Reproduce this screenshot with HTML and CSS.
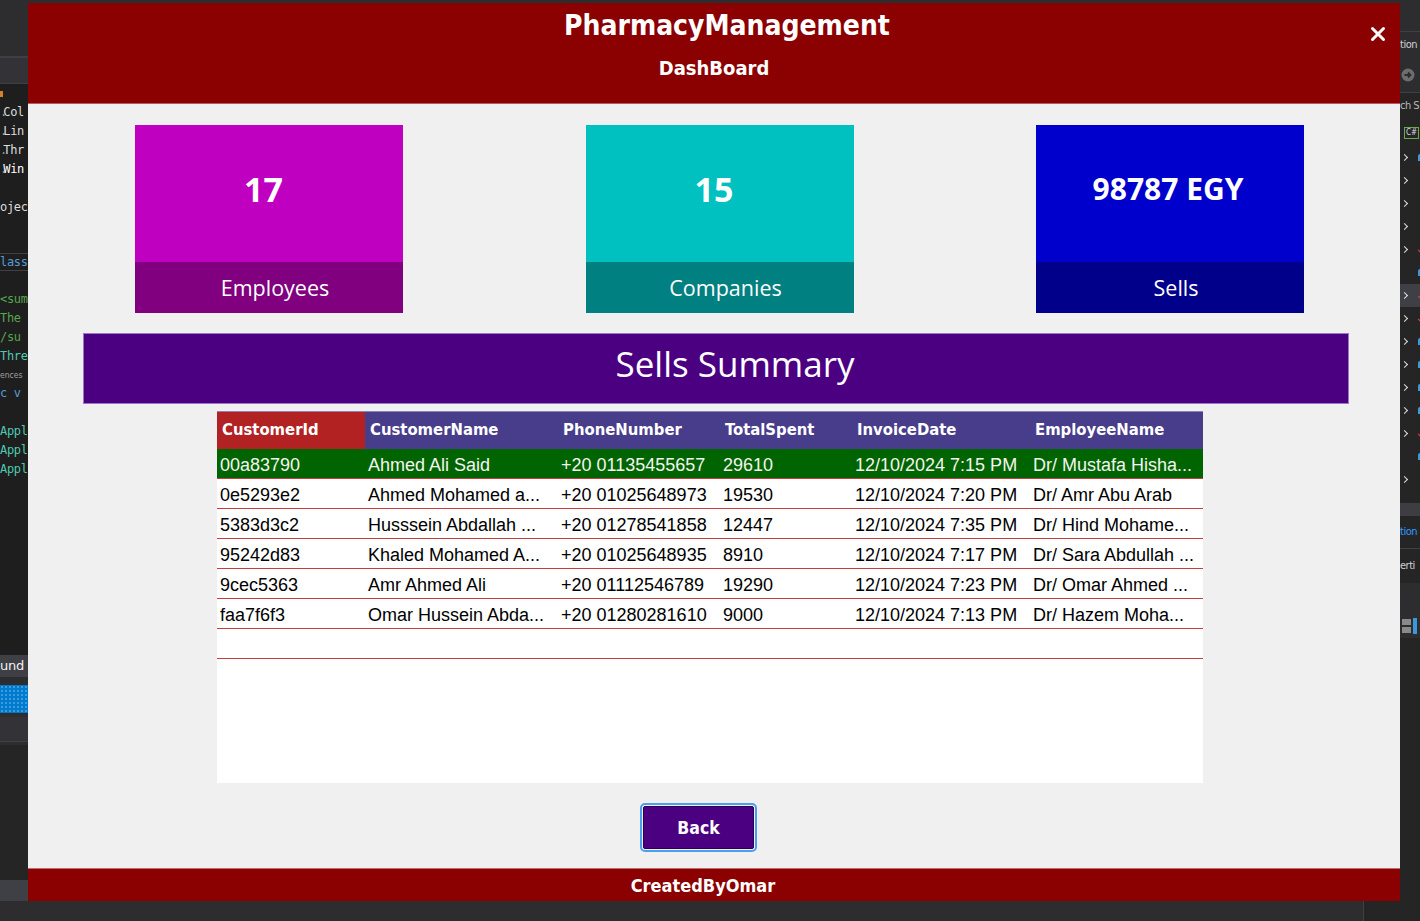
FILE: index.html
```html
<!DOCTYPE html>
<html lang="en">
<head>
<meta charset="utf-8">
<title>PharmacyManagement - DashBoard</title>
<link rel="stylesheet" href="styles.css">
</head>
<body>
<div class="desktop">
  <div class="topbar"></div>

  <aside class="ide-left">
    <div class="ide-toolbar"></div>
    <div class="ide-sep2"></div>
    <div class="ide-tabs"></div>
    <div class="ide-sep1"></div>
    <div class="editor">
      <div class="code"><span class="mark"></span></div>
      <div class="code txt"><span class="dot">.</span>Col</div>
      <div class="code txt"><span class="dot">.</span>Lin</div>
      <div class="code txt"><span class="dot">.</span>Thr</div>
      <div class="code txt bright"><span class="dot">.</span>Win</div>
      <div class="code"></div>
      <div class="code txt">ojec</div>
      <div class="code"></div>
      <div class="gap17"></div>
      <div class="code band kw">lass</div>
      <div class="code"></div>
      <div class="code cm">&lt;sum</div>
      <div class="code cm">The</div>
      <div class="code cm">/su</div>
      <div class="code ty">Thre</div>
      <div class="lens">ences</div>
      <div class="code kw">c v</div>
      <div class="code"></div>
      <div class="code ty">Appl</div>
      <div class="code ty">Appl</div>
      <div class="code ty">Appl</div>
    </div>
    <div class="tool-tab">und</div>
    <div class="tool-gap"></div>
    <div class="tool-blue"></div>
    <div class="tool-gap2"></div>
    <div class="tool-row"></div>
    <div class="tool-line"></div>
    <div class="tool-body"></div>
    <div class="tool-foot"></div>
  </aside>

  <main class="window">
    <header class="win-header">
      <div class="title">PharmacyManagement</div>
      <div class="subtitle">DashBoard</div>
      <button class="close" aria-label="Close">
        <svg width="16" height="16" viewBox="0 0 16 16"><path d="M2.5 2.5 L13.5 13.5 M13.5 2.5 L2.5 13.5" stroke="#ffffff" stroke-width="3" stroke-linecap="round" fill="none"/></svg>
      </button>
    </header>

    <section class="content">
      <div class="cards">
        <div class="card card-emp">
          <div class="card-value">17</div>
          <div class="card-label">Employees</div>
        </div>
        <div class="card card-comp">
          <div class="card-value">15</div>
          <div class="card-label">Companies</div>
        </div>
        <div class="card card-sells">
          <div class="card-value small">98787 EGY</div>
          <div class="card-label">Sells</div>
        </div>
      </div>

      <div class="banner">Sells Summary</div>

      <div class="grid">
        <div class="grow ghead">
          <div class="hc first">CustomerId</div>
          <div class="hc">CustomerName</div>
          <div class="hc">PhoneNumber</div>
          <div class="hc">TotalSpent</div>
          <div class="hc">InvoiceDate</div>
          <div class="hc">EmployeeName</div>
        </div>
        <div class="grow drow selected">
          <div class="dc">00a83790</div>
          <div class="dc">Ahmed Ali Said</div>
          <div class="dc">+20 01135455657</div>
          <div class="dc">29610</div>
          <div class="dc">12/10/2024 7:15 PM</div>
          <div class="dc">Dr/ Mustafa Hisha...</div>
        </div>
        <div class="grow drow">
          <div class="dc">0e5293e2</div>
          <div class="dc">Ahmed Mohamed a...</div>
          <div class="dc">+20 01025648973</div>
          <div class="dc">19530</div>
          <div class="dc">12/10/2024 7:20 PM</div>
          <div class="dc">Dr/ Amr Abu Arab</div>
        </div>
        <div class="grow drow">
          <div class="dc">5383d3c2</div>
          <div class="dc">Husssein Abdallah ...</div>
          <div class="dc">+20 01278541858</div>
          <div class="dc">12447</div>
          <div class="dc">12/10/2024 7:35 PM</div>
          <div class="dc">Dr/ Hind Mohame...</div>
        </div>
        <div class="grow drow">
          <div class="dc">95242d83</div>
          <div class="dc">Khaled Mohamed A...</div>
          <div class="dc">+20 01025648935</div>
          <div class="dc">8910</div>
          <div class="dc">12/10/2024 7:17 PM</div>
          <div class="dc">Dr/ Sara Abdullah ...</div>
        </div>
        <div class="grow drow">
          <div class="dc">9cec5363</div>
          <div class="dc">Amr Ahmed Ali</div>
          <div class="dc">+20 01112546789</div>
          <div class="dc">19290</div>
          <div class="dc">12/10/2024 7:23 PM</div>
          <div class="dc">Dr/ Omar Ahmed ...</div>
        </div>
        <div class="grow drow">
          <div class="dc">faa7f6f3</div>
          <div class="dc">Omar Hussein Abda...</div>
          <div class="dc">+20 01280281610</div>
          <div class="dc">9000</div>
          <div class="dc">12/10/2024 7:13 PM</div>
          <div class="dc">Dr/ Hazem Moha...</div>
        </div>
        <div class="grow drow">
          <div class="dc"></div><div class="dc"></div><div class="dc"></div>
          <div class="dc"></div><div class="dc"></div><div class="dc"></div>
        </div>
      </div>

      <button class="back">Back</button>
    </section>

    <footer class="win-footer">CreatedByOmar</footer>
  </main>

  <aside class="ide-right">
    <div class="r-top"></div>
    <div class="r-line"></div>
    <div class="r-text">tion</div>
    <div class="r-icon">
      <svg width="14" height="14" viewBox="0 0 14 14"><circle cx="7" cy="7" r="6.5" fill="#6d6d6d"/><path d="M3.5 7 H9.5 M7 4.5 L9.5 7 L7 9.5" stroke="#2d2d30" stroke-width="1.8" fill="none"/></svg>
    </div>
    <div class="r-line"></div>
    <div class="r-text search">ch S</div>
    <div class="r-cs"><span class="csbox">C#</span></div>
    <div class="tree">
      <div class="trow"><span class="chev"></span><span class="ic blue"></span></div>
      <div class="trow"><span class="chev"></span></div>
      <div class="trow"><span class="chev"></span></div>
      <div class="trow"><span class="chev"></span></div>
      <div class="trow"><span class="chev"></span><span class="ic red"></span></div>
      <div class="trow"><span class="chev blank"></span><span class="ic blue"></span></div>
      <div class="trow hl"><span class="chev"></span><span class="ic red"></span></div>
      <div class="trow"><span class="chev"></span><span class="ic red"></span></div>
      <div class="trow"><span class="chev"></span><span class="ic blue"></span></div>
      <div class="trow"><span class="chev"></span><span class="ic blue"></span></div>
      <div class="trow"><span class="chev"></span><span class="ic blue"></span></div>
      <div class="trow"><span class="chev"></span><span class="ic blue"></span></div>
      <div class="trow"><span class="chev"></span><span class="ic red"></span></div>
      <div class="trow"><span class="chev blank"></span><span class="ic blue"></span></div>
      <div class="trow"><span class="chev"></span></div>
    </div>
    <div class="r-scroll"></div>
    <div class="r-text tab-blue">tion</div>
    <div class="r-line"></div>
    <div class="r-text props">erti</div>
    <div class="r-toolbar"></div>
    <div class="r-az"><span class="az"></span></div>
    <div class="r-body"></div>
  </aside>

  <div class="bottombar"><div class="bb-right"></div></div>
</div>
</body>
</html>
```

FILE: styles.css
```css
* {
  box-sizing: border-box;
  margin: 0;
  padding: 0;
}

html, body {
  width: 1420px;
  height: 921px;
  overflow: hidden;
  background: #2d2d30;
}

body {
  font-family: "Liberation Sans", Arial, sans-serif;
}

.desktop {
  display: grid;
  grid-template-columns: 28px 1372px 20px;
  grid-template-rows: 3px 898px 20px;
  width: 1420px;
  height: 921px;
}

.topbar {
  grid-column: 1 / 4;
  background: #2d2d30;
}

.bottombar {
  grid-column: 1 / 4;
  background: #2d2d30;
  display: flex;
  justify-content: flex-end;
}

.bb-right {
  width: 57px;
  border-left: 1px solid #3f3f46;
  background: #252526;
}

/* ---------- IDE left strip ---------- */
.ide-left {
  display: flex;
  flex-direction: column;
  overflow: hidden;
  background: #1e1e1e;
  font-family: "DejaVu Sans Mono", "Liberation Mono", monospace;
  font-size: 12px;
  letter-spacing: -0.3px;
  white-space: nowrap;
}

.ide-toolbar { height: 53px; background: #2d2d30; flex: none; }
.ide-sep2 { height: 2px; background: #3f3f46; flex: none; }
.ide-tabs { height: 25px; background: #333337; flex: none; }
.ide-sep1 { height: 1px; background: #3f3f46; flex: none; }

.editor {
  height: 571px;
  flex: none;
  background: #1e1e1e;
}

.code {
  height: 19px;
  line-height: 19px;
  color: #dcdcdc;
}

.dot { letter-spacing: -4px; color: #9a9a9a; }
.code.bright { color: #ffffff; }
.code.kw { color: #569cd6; }
.code.cm { color: #57a64a; }
.code.ty { color: #4ec9b0; }

.mark {
  display: inline-block;
  width: 3px;
  height: 6px;
  background: #d7802b;
  vertical-align: middle;
}

.gap17 { height: 17px; }

.band {
  height: 18px;
  line-height: 16px;
  border-top: 1px solid #3f3f46;
  border-bottom: 1px solid #3f3f46;
}

.lens {
  height: 18px;
  line-height: 18px;
  font-family: "DejaVu Sans Condensed", "DejaVu Sans", sans-serif;
  font-size: 8.5px;
  letter-spacing: 0;
  color: #a0a0a0;
}

.tool-tab {
  height: 22px;
  flex: none;
  background: #3f3f46;
  color: #f1f1f1;
  font-family: "DejaVu Sans", sans-serif;
  font-size: 13px;
  line-height: 22px;
}

.tool-gap { height: 8px; background: #2d2d30; flex: none; }
.tool-blue {
  height: 28px;
  flex: none;
  background: #007acc;
  background-image: radial-gradient(circle, #3d9be0 0.8px, transparent 1px);
  background-size: 4px 4px;
  background-position: 0 12px;
}
.tool-gap2 { height: 4px; background: #2d2d30; flex: none; }
.tool-row { height: 24px; background: #333337; flex: none; }
.tool-line { height: 4px; background: #2d2d30; border-top: 1px solid #3f3f46; flex: none; }
.tool-body { flex: 1; background: #252526; }
.tool-foot { height: 21px; background: #3f3f46; flex: none; }

/* ---------- IDE right strip ---------- */
.ide-right {
  display: flex;
  flex-direction: column;
  overflow: hidden;
  background: #252526;
  font-family: "DejaVu Sans Condensed", "DejaVu Sans", sans-serif;
  font-size: 11px;
  letter-spacing: -0.5px;
  white-space: nowrap;
}

.r-top { height: 28px; background: #2d2d30; flex: none; }
.r-line { height: 1px; background: #3f3f46; flex: none; }
.r-text {
  height: 26px;
  line-height: 26px;
  color: #d0d0d0;
  background: #2d2d30;
  flex: none;
}
.r-text.search { height: 27px; background: #252526; color: #b8b8b8; }
.r-icon {
  height: 34px;
  display: flex;
  align-items: center;
  padding-left: 1px;
  background: #2d2d30;
  flex: none;
}
.r-cs {
  height: 26px;
  display: flex;
  align-items: center;
  padding-left: 4px;
  flex: none;
}
.csbox {
  font-size: 8px;
  line-height: 10px;
  letter-spacing: 0;
  color: #dcdcdc;
  border: 1px solid #6ca84c;
  padding: 0 1px;
}

.tree { display: flex; flex-direction: column; flex: none; }
.trow {
  height: 23px;
  display: flex;
  align-items: center;
  gap: 6px;
  padding-left: 2px;
}
.trow.hl { background: #3f3f46; }

/* chevron drawn as a rotated outlined square corner */
.chev {
  width: 5px;
  height: 5px;
  border-top: 1.5px solid #e0e0e0;
  border-right: 1.5px solid #e0e0e0;
  transform: rotate(45deg);
  flex: none;
}
.chev.blank { border-color: transparent; }

.ic {
  width: 6px;
  height: 7px;
  flex: none;
  margin-left: 5px;
}
.ic.blue {
  background: #3a9ad9;
  border-radius: 2px 2px 0 0;
}
.ic.red {
  width: 5px;
  height: 3px;
  border-left: 1.5px solid #e03a3a;
  border-bottom: 1.5px solid #e03a3a;
  transform: rotate(-45deg);
}

.r-scroll { height: 25px; border-top: 12px solid #252526; background: #3e3e42; flex: none; }
.r-text.tab-blue { height: 32px; line-height: 32px; color: #3399ff; background: #252526; }
.r-text.props { height: 34px; line-height: 34px; background: #252526; color: #d0d0d0; }
.r-toolbar { height: 30px; background: #2d2d30; flex: none; }
.r-az {
  height: 25px;
  background: #2d2d30;
  padding-left: 1px;
  display: flex;
  align-items: center;
  flex: none;
}
.az {
  display: block;
  width: 16px;
  height: 16px;
  background: linear-gradient(#8a8a8a, #8a8a8a) 1px 1px / 9px 6px no-repeat,
              linear-gradient(#8a8a8a, #8a8a8a) 1px 9px / 9px 6px no-repeat;
  border-right: 4px solid #3a9ad9;
}
.r-body { flex: 1; background: #252526; }

/* ---------- Dialog window ---------- */
.window {
  display: flex;
  flex-direction: column;
  background: #f0f0f0;
  overflow: hidden;
}

.win-header {
  position: relative;
  height: 101px;
  flex: none;
  background: #8b0000;
  border-bottom: 1px solid #b85a5a;
  display: flex;
  flex-direction: column;
  align-items: center;
  color: #ffffff;
  font-family: "DejaVu Sans Condensed", "DejaVu Sans", sans-serif;
  font-stretch: condensed;
  font-weight: bold;
}

.title {
  margin-top: 6px;
  margin-left: 26px;
  height: 34px;
  line-height: 34px;
  font-size: 28px;
}

.subtitle {
  margin-top: 12px;
  height: 26px;
  line-height: 26px;
  font-size: 20px;
}

.close {
  position: absolute;
  top: 22px;
  right: 13px;
  width: 18px;
  height: 18px;
  border: none;
  background: transparent;
  display: flex;
  align-items: center;
  justify-content: center;
}

.content {
  flex: 1;
  display: flex;
  flex-direction: column;
  align-items: flex-start;
  padding-top: 21px;
}

.cards {
  display: flex;
  gap: 182.5px;
  margin-left: 107px;
}

.card {
  width: 268px;
  height: 188px;
  display: flex;
  flex-direction: column;
  color: #ffffff;
  font-family: "Open Sans", "Noto Sans", sans-serif;
}

.card-value {
  flex: 1;
  display: flex;
  align-items: center;
  justify-content: center;
  padding-right: 11px;
  padding-bottom: 10px;
  font-size: 34px;
  font-weight: bold;
}

.card-value.small {
  font-size: 30px;
  padding-right: 4px;
}

.card-label {
  height: 51px;
  flex: none;
  display: flex;
  align-items: center;
  justify-content: center;
  padding-left: 12px;
  font-size: 21.5px;
}

.card-emp .card-value { background: #c000c0; }
.card-emp .card-label { background: #800080; }
.card-comp .card-value { background: #00c0c0; }
.card-comp .card-label { background: #008080; }
.card-sells .card-value { background: #0000cd; }
.card-sells .card-label { background: #00008b; }

.banner {
  margin-top: 20px;
  margin-left: 55px;
  width: 1266px;
  height: 71px;
  background: #4b0082;
  border: 1px solid #9a78c8;
  display: flex;
  align-items: center;
  justify-content: center;
  padding-left: 38px;
  padding-bottom: 10px;
  color: #ffffff;
  font-family: "Open Sans", "Noto Sans", sans-serif;
  font-size: 35px;
  font-weight: 400;
}

.grid {
  margin-top: 7px;
  margin-left: 189px;
  width: 986px;
  height: 372px;
  background: #ffffff;
  display: flex;
  flex-direction: column;
}

.grow {
  display: grid;
  grid-template-columns: 148px 193px 162px 132px 178px 173px;
  flex: none;
}

.ghead {
  height: 38px;
  background: #483d8b;
  border-top: 1px solid #8a84b8;
}

.hc {
  display: flex;
  align-items: center;
  padding-left: 5px;
  padding-bottom: 3px;
  color: #ffffff;
  font-family: "DejaVu Sans Condensed", "DejaVu Sans", sans-serif;
  font-stretch: condensed;
  font-weight: bold;
  font-size: 16.5px;
  white-space: nowrap;
  overflow: hidden;
}

.hc.first { background: #b22222; }

.drow {
  height: 30px;
  border-bottom: 1px solid #c83c3c;
}

.drow.selected {
  background: #006400;
  color: #ffffff;
}

.dc {
  display: flex;
  align-items: center;
  padding-left: 3px;
  padding-top: 3px;
  font-size: 18px;
  white-space: nowrap;
  overflow: hidden;
  color: #000000;
}

.drow.selected .dc { color: #f4f4f0; }

.back {
  margin-top: 23px;
  margin-left: 615px;
  width: 111px;
  height: 43px;
  background: #4b0082;
  border: 1px solid #2a0055;
  border-radius: 2px;
  outline: 2px solid #4a9ff0;
  outline-offset: 1px;
  padding-top: 1px;
  color: #ffffff;
  font-family: "DejaVu Sans Condensed", "DejaVu Sans", sans-serif;
  font-stretch: condensed;
  font-weight: bold;
  font-size: 17.5px;
}

.win-footer {
  height: 33px;
  flex: none;
  background: #8b0000;
  border-top: 1px solid #c06a6a;
  display: flex;
  align-items: center;
  justify-content: center;
  padding-right: 22px;
  color: #ffffff;
  font-family: "DejaVu Sans Condensed", "DejaVu Sans", sans-serif;
  font-stretch: condensed;
  font-weight: bold;
  font-size: 18px;
}
```
